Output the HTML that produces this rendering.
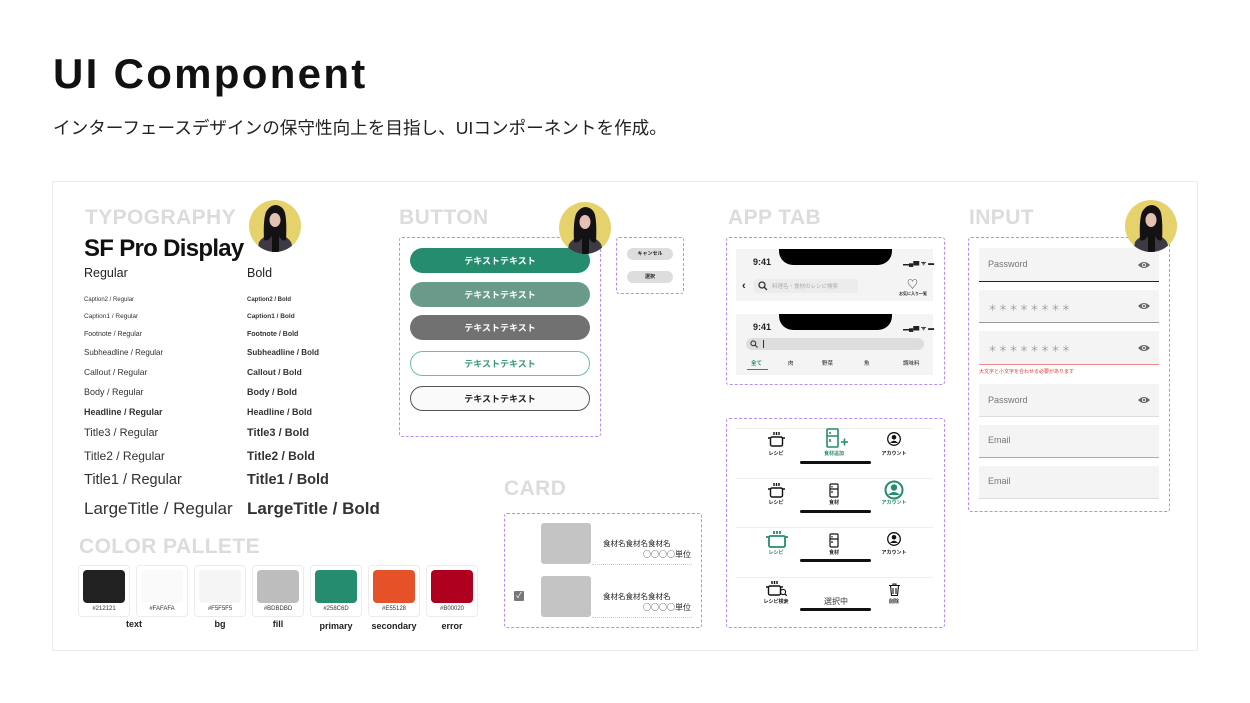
<!DOCTYPE html>
<html><head><meta charset="utf-8">
<style>
*{margin:0;padding:0;box-sizing:border-box}
body{width:1250px;height:703px;background:#fff;position:relative;overflow:hidden;font-family:"Liberation Sans","Noto Sans CJK JP",sans-serif;color:#212121}
.a{position:absolute;white-space:nowrap}
.h{font-weight:bold;color:#dcdcdc;font-size:21px;letter-spacing:0.4px}
.dash{position:absolute;border:1px dashed #b98cf5;border-radius:3px}
.btn{position:absolute;left:410px;width:180px;height:25px;border-radius:13px;font-size:9px;font-weight:bold;text-align:center;line-height:25px;color:#fff;font-family:"Noto Sans CJK JP",sans-serif}
.sw{position:absolute;top:565px;width:52px;height:52px;border:1px solid #ececec;border-radius:4px}
.sw i{position:absolute;left:4px;top:4px;width:42px;height:33px;border-radius:4px}
.sw b{position:absolute;left:0;width:50px;top:40px;text-align:center;font-size:6px;font-weight:normal;color:#333}
.sn{position:absolute;top:621px;width:52px;text-align:center;font-size:9px;font-weight:bold}
.r{position:absolute;font-size:8px;color:#333}
.f{position:absolute;left:979px;width:180px;background:#f4f4f4}
.f span{position:absolute;left:9px;font-size:9px;color:#777}
.eye{position:absolute;right:9px;width:12px;height:8px}
.tl{position:absolute;font-size:5px;font-weight:bold;text-align:center;width:50px;font-family:"Noto Sans CJK JP",sans-serif}
.bar{position:absolute;left:800px;width:71px;height:3px;background:#111;border-radius:2px}
.ln{position:absolute;left:736px;width:197px;height:1px;background:#efefef}
</style></head><body>
<svg width="0" height="0" style="position:absolute">
<defs>
<g id="av">
<circle cx="26" cy="26" r="26" fill="#e5d26d"/>
<clipPath id="cp"><circle cx="26" cy="26" r="26"/></clipPath>
<g clip-path="url(#cp)">
<path d="M8 52 L10 42 Q14 36 22 35 L30 35 Q38 36 42 42 L45 52Z" fill="#3d3a45"/>
<path d="M15 40 Q14 20 17 12 Q21 5 27 5 Q34 6 36 13 Q38 22 37 40 Q33 42 30 36 L23 36 Q19 42 15 40Z" fill="#141214"/>
<ellipse cx="26" cy="20" rx="5.5" ry="7" fill="#e4c1b2"/>
<path d="M20 16 Q22 10 27 10 Q32 11 32 16 L32 13 Q30 8 26 8 Q21 9 20 14Z" fill="#141214"/>
<rect x="23" y="34" width="7" height="18" fill="#111"/>
</g></g>
<g id="pot" fill="none" stroke="#111" stroke-width="1.4"><rect x="2.5" y="6" width="12" height="9" rx="1.5"/><path d="M0 7h2.5M14.5 7h2.5M6 1v3M8.5 1v3M11 1v3"/></g>
<g id="fr" fill="none" stroke="#111" stroke-width="1.2"><rect x="1" y="1" width="8" height="13" rx="1"/><path d="M1 6h8M3 3v1.5M3 8v2"/></g>
<g id="ac"><circle cx="7" cy="7" r="6.3" fill="none" stroke="#111" stroke-width="1.3"/><circle cx="7" cy="5.3" r="2.3" fill="#111"/><path d="M3 11 Q7 6.5 11 11Z" fill="#111"/></g>
<g id="eye"><path d="M0 4 Q6 -2 12 4 Q6 10 0 4Z" fill="#666"/><circle cx="6" cy="4" r="2" fill="#f4f4f4"/><circle cx="6" cy="4" r="1.1" fill="#666"/></g>
</defs></svg>

<div class="a" style="left:53px;top:50px;font-size:42px;font-weight:bold;color:#111;letter-spacing:2.3px">UI Component</div>
<div class="a" style="left:53px;top:115px;font-size:17.6px;color:#222">インターフェースデザインの保守性向上を目指し、UIコンポーネントを作成。</div>

<div style="position:absolute;left:52px;top:181px;width:1146px;height:470px;border:1px solid #ebebeb"></div>

<!-- TYPOGRAPHY -->
<div class="a h" style="left:85px;top:206px">TYPOGRAPHY</div>
<svg class="a" style="left:249px;top:200px" width="52" height="52"><use href="#av"/></svg>
<div class="a" style="left:84px;top:235px;font-size:24px;font-weight:bold;color:#111;letter-spacing:-0.7px">SF Pro Display</div>
<div class="a" style="left:84px;top:266px;font-size:12.5px">Regular</div>
<div class="a" style="left:247px;top:266px;font-size:12.5px">Bold</div>
<div class="r" style="left:84px;top:297px;font-size:6px">Caption2 / Regular</div>
<div class="r" style="left:247px;top:297px;font-size:6px;font-weight:bold">Caption2 / Bold</div>
<div class="r" style="left:84px;top:313px;font-size:6.5px">Caption1 / Regular</div>
<div class="r" style="left:247px;top:313px;font-size:6.5px;font-weight:bold">Caption1 / Bold</div>
<div class="r" style="left:84px;top:331px;font-size:7px">Footnote / Regular</div>
<div class="r" style="left:247px;top:331px;font-size:7px;font-weight:bold">Footnote / Bold</div>
<div class="r" style="left:84px;top:348px;font-size:8px">Subheadline / Regular</div>
<div class="r" style="left:247px;top:348px;font-size:8px;font-weight:bold">Subheadline / Bold</div>
<div class="r" style="left:84px;top:367px;font-size:8.5px">Callout / Regular</div>
<div class="r" style="left:247px;top:367px;font-size:8.5px;font-weight:bold">Callout / Bold</div>
<div class="r" style="left:84px;top:387px;font-size:9px">Body / Regular</div>
<div class="r" style="left:247px;top:387px;font-size:9px;font-weight:bold">Body / Bold</div>
<div class="r" style="left:84px;top:407px;font-size:9px;font-weight:bold">Headline / Regular</div>
<div class="r" style="left:247px;top:407px;font-size:9px;font-weight:bold">Headline / Bold</div>
<div class="r" style="left:84px;top:427px;font-size:11px">Title3 / Regular</div>
<div class="r" style="left:247px;top:427px;font-size:11px;font-weight:bold">Title3 / Bold</div>
<div class="r" style="left:84px;top:449px;font-size:12px">Title2 / Regular</div>
<div class="r" style="left:247px;top:449px;font-size:12px;font-weight:bold">Title2 / Bold</div>
<div class="r" style="left:84px;top:472px;font-size:14.5px">Title1 / Regular</div>
<div class="r" style="left:247px;top:472px;font-size:14.5px;font-weight:bold">Title1 / Bold</div>
<div class="r" style="left:84px;top:499px;font-size:17px">LargeTitle / Regular</div>
<div class="r" style="left:247px;top:499px;font-size:17px;font-weight:bold">LargeTitle / Bold</div>

<!-- COLOR -->
<div class="a h" style="left:79px;top:535px">COLOR PALLETE</div>
<div class="sw" style="left:78px"><i style="background:#212121"></i><b>#212121</b></div>
<div class="sw" style="left:136px"><i style="background:#fafafa"></i><b>#FAFAFA</b></div>
<div class="sw" style="left:194px"><i style="background:#f5f5f5"></i><b>#F5F5F5</b></div>
<div class="sw" style="left:252px"><i style="background:#bdbdbd"></i><b>#BDBDBD</b></div>
<div class="sw" style="left:310px"><i style="background:#258c6d"></i><b>#258C6D</b></div>
<div class="sw" style="left:368px"><i style="background:#e55128"></i><b>#E55128</b></div>
<div class="sw" style="left:426px"><i style="background:#b00020"></i><b>#B00020</b></div>
<div class="sn" style="left:108px;top:619px">text</div>
<div class="sn" style="left:194px;top:619px">bg</div>
<div class="sn" style="left:252px;top:619px">fill</div>
<div class="sn" style="left:310px">primary</div>
<div class="sn" style="left:368px">secondary</div>
<div class="sn" style="left:426px">error</div>

<!-- BUTTON -->
<div class="a h" style="left:399px;top:206px">BUTTON</div>
<div class="dash" style="left:399px;top:237px;width:202px;height:200px"></div>
<div class="btn" style="top:248px;background:#258c6d">テキストテキスト</div>
<div class="btn" style="top:282px;background:#6a9b8a">テキストテキスト</div>
<div class="btn" style="top:315px;background:#717171">テキストテキスト</div>
<div class="btn" style="top:351px;background:#fff;border:1px solid #6ebf9f;color:#3a9b78;line-height:23px">テキストテキスト</div>
<div class="btn" style="top:386px;background:#fafafa;border:1px solid #555;color:#222;line-height:23px">テキストテキスト</div>
<svg class="a" style="left:559px;top:202px" width="52" height="52"><use href="#av"/></svg>
<div class="dash" style="left:616px;top:237px;width:68px;height:57px"></div>
<div class="a" style="left:627px;top:248px;width:46px;height:12px;border-radius:6px;background:#ddd;font-size:5px;font-weight:bold;text-align:center;line-height:12px">キャンセル</div>
<div class="a" style="left:627px;top:271px;width:46px;height:12px;border-radius:6px;background:#ddd;font-size:5px;font-weight:bold;text-align:center;line-height:12px">選択</div>

<!-- CARD -->
<div class="a h" style="left:504px;top:477px">CARD</div>
<div class="dash" style="left:504px;top:513px;width:198px;height:115px"></div>
<div class="a" style="left:541px;top:523px;width:50px;height:41px;background:#c4c4c4;border-radius:3px"></div>
<div class="a" style="left:541px;top:576px;width:50px;height:41px;background:#c4c4c4;border-radius:3px"></div>
<div class="a" style="left:603px;top:538px;font-size:7.5px">食材名食材名食材名</div>
<div class="a" style="left:643px;top:549px;font-size:8px;font-family:'Noto Sans CJK JP',sans-serif;line-height:12px">○○○○単位</div>
<div class="a" style="left:592px;top:564px;width:100px;border-top:1px dotted #ccc"></div>
<div class="a" style="left:603px;top:591px;font-size:7.5px">食材名食材名食材名</div>
<div class="a" style="left:643px;top:602px;font-size:8px;font-family:'Noto Sans CJK JP',sans-serif;line-height:12px">○○○○単位</div>
<div class="a" style="left:592px;top:617px;width:100px;border-top:1px dotted #ccc"></div>
<div class="a" style="left:514px;top:591px;width:10px;height:10px;background:#777;border-radius:1px;color:#fff;font-size:8px;line-height:10px;text-align:center">✓</div>

<!-- APP TAB -->
<div class="a h" style="left:728px;top:206px">APP TAB</div>
<div class="dash" style="left:726px;top:237px;width:219px;height:148px"></div>
<div class="a" style="left:736px;top:249px;width:197px;height:52px;background:#f4f4f4"></div>
<div class="a" style="left:779px;top:249px;width:113px;height:16px;background:#000;border-radius:0 0 14px 14px"></div>
<div class="a" style="left:753px;top:257px;font-size:9px;font-weight:bold">9:41</div>
<div class="a" style="left:903px;top:258px;font-size:6px;font-weight:bold">▂▄▆ ᯤ ▬</div>
<div class="a" style="left:742px;top:280px;font-size:11px;font-weight:bold">‹</div>
<div class="a" style="left:754px;top:279px;width:104px;height:14px;background:#ececec;border-radius:3px"></div>
<svg class="a" style="left:758px;top:281px" width="10" height="10"><circle cx="4" cy="4" r="3" fill="none" stroke="#333" stroke-width="1.3"/><path d="M6 6l3 3" stroke="#333" stroke-width="1.3"/></svg>
<div class="a" style="left:772px;top:282px;font-size:5.5px;color:#aaa">料理名・食材のレシピ検索</div>
<div class="a" style="left:907px;top:276px;font-size:11px;color:#333">♡</div>
<div class="a" style="left:899px;top:291px;font-size:4px;font-weight:bold">お気に入り一覧</div>
<div class="a" style="left:736px;top:314px;width:197px;height:61px;background:#f4f4f4"></div>
<div class="a" style="left:779px;top:314px;width:113px;height:16px;background:#000;border-radius:0 0 14px 14px"></div>
<div class="a" style="left:753px;top:322px;font-size:9px;font-weight:bold">9:41</div>
<div class="a" style="left:903px;top:323px;font-size:6px;font-weight:bold">▂▄▆ ᯤ ▬</div>
<div class="a" style="left:746px;top:338px;width:178px;height:12px;background:#ddd;border-radius:6px"></div>
<svg class="a" style="left:750px;top:340px" width="8" height="8"><circle cx="3.3" cy="3.3" r="2.4" fill="none" stroke="#333" stroke-width="1.1"/><path d="M5 5l2.5 2.5" stroke="#333" stroke-width="1.1"/></svg>
<div class="a" style="left:763px;top:340px;width:1px;height:8px;background:#333"></div>
<div class="a" style="left:751px;top:359px;font-size:5.5px;color:#258c6d;font-weight:bold">全て</div>
<div class="a" style="left:747px;top:369px;width:21px;height:1px;background:#258c6d"></div>
<div class="a" style="left:788px;top:359px;font-size:5.5px">肉</div>
<div class="a" style="left:822px;top:359px;font-size:5.5px">野菜</div>
<div class="a" style="left:864px;top:359px;font-size:5.5px">魚</div>
<div class="a" style="left:903px;top:359px;font-size:5.5px">調味料</div>

<div class="dash" style="left:726px;top:418px;width:219px;height:210px"></div>
<div class="ln" style="top:428px"></div><div class="ln" style="top:478px"></div><div class="ln" style="top:527px"></div><div class="ln" style="top:577px"></div>
<!-- row1 -->
<svg class="a" style="left:768px;top:431px" width="17" height="16"><use href="#pot"/></svg>
<svg class="a" style="left:826px;top:428px" width="24" height="22"><g stroke="#258c6d" stroke-width="1.6" fill="none"><rect x="1" y="1" width="11" height="18" rx="1"/><path d="M1 8h11M4 4v2M4 11v3M15 14h7M18.5 10.5v7"/></g></svg>
<svg class="a" style="left:887px;top:432px" width="14" height="14"><use href="#ac"/></svg>
<div class="tl" style="left:751px;top:450px">レシピ</div>
<div class="tl" style="left:809px;top:450px;color:#258c6d">食材追加</div>
<div class="tl" style="left:869px;top:450px">アカウント</div>
<div class="bar" style="top:461px"></div>
<!-- row2 -->
<svg class="a" style="left:768px;top:482px" width="17" height="16"><use href="#pot"/></svg>
<svg class="a" style="left:829px;top:483px" width="10" height="15"><use href="#fr"/></svg>
<svg class="a" style="left:884px;top:480px" width="20" height="20"><circle cx="10" cy="10" r="8.5" fill="none" stroke="#258c6d" stroke-width="2"/><circle cx="10" cy="7.5" r="3.2" fill="#258c6d"/><path d="M4 15 Q10 9 16 15Z" fill="#258c6d"/></svg>
<div class="tl" style="left:751px;top:499px">レシピ</div>
<div class="tl" style="left:809px;top:499px">食材</div>
<div class="tl" style="left:869px;top:499px;color:#258c6d">アカウント</div>
<div class="bar" style="top:510px"></div>
<!-- row3 -->
<svg class="a" style="left:766px;top:530px" width="22" height="18"><g fill="none" stroke="#258c6d" stroke-width="1.8"><rect x="3" y="6" width="16" height="11" rx="1.5"/><path d="M0 7h3M19 7h3M8 1v3M11 1v3M14 1v3"/></g></svg>
<svg class="a" style="left:829px;top:533px" width="10" height="15"><use href="#fr"/></svg>
<svg class="a" style="left:887px;top:532px" width="14" height="14"><use href="#ac"/></svg>
<div class="tl" style="left:751px;top:549px;color:#258c6d">レシピ</div>
<div class="tl" style="left:809px;top:549px">食材</div>
<div class="tl" style="left:869px;top:549px">アカウント</div>
<div class="bar" style="top:559px"></div>
<!-- row4 -->
<svg class="a" style="left:766px;top:580px" width="22" height="17"><use href="#pot"/><circle cx="17" cy="12" r="2.6" fill="none" stroke="#111" stroke-width="1.1"/><path d="M18.8 13.8l2 2" stroke="#111" stroke-width="1.1"/></svg>
<svg class="a" style="left:889px;top:583px" width="11" height="13"><g fill="none" stroke="#111" stroke-width="1.1"><path d="M0 2.5h11M4 2.5V1h3v1.5M1.5 2.5l1 10h6l1-10M4 5v6M7 5v6"/></g></svg>
<div class="tl" style="left:751px;top:598px">レシピ検索</div>
<div class="a" style="left:824px;top:596px;font-size:8px;color:#333">選択中</div>
<div class="tl" style="left:869px;top:598px">削除</div>
<div class="bar" style="top:608px"></div>

<!-- INPUT -->
<div class="a h" style="left:969px;top:206px">INPUT</div>
<div class="dash" style="left:968px;top:237px;width:202px;height:275px"></div>
<div class="f" style="top:248px;height:34px;border-bottom:1px solid #222"><span style="top:11px">Password</span><svg class="eye" style="top:13px"><use href="#eye"/></svg></div>
<div class="f" style="top:290px;height:33px;border-bottom:1px solid #999"><span style="top:11px;font-size:9px;letter-spacing:1.5px;color:#999">＊＊＊＊＊＊＊＊</span><svg class="eye" style="top:12px"><use href="#eye"/></svg></div>
<div class="f" style="top:331px;height:34px;border-bottom:1px solid #f08a8a"><span style="top:11px;font-size:9px;letter-spacing:1.5px;color:#999">＊＊＊＊＊＊＊＊</span><svg class="eye" style="top:13px"><use href="#eye"/></svg></div>
<div class="a" style="left:979px;top:368px;font-size:5px;color:#e53935">大文字と小文字を合わせる必要があります</div>
<div class="f" style="top:384px;height:33px;border-bottom:1px solid #ddd"><span style="top:11px">Password</span><svg class="eye" style="top:12px"><use href="#eye"/></svg></div>
<div class="f" style="top:425px;height:33px;border-bottom:1px solid #aaa"><span style="top:10px">Email</span></div>
<div class="f" style="top:466px;height:33px;border-bottom:1px solid #ddd"><span style="top:10px">Email</span></div>
<svg class="a" style="left:1125px;top:200px" width="52" height="52"><use href="#av"/></svg>
</body></html>
